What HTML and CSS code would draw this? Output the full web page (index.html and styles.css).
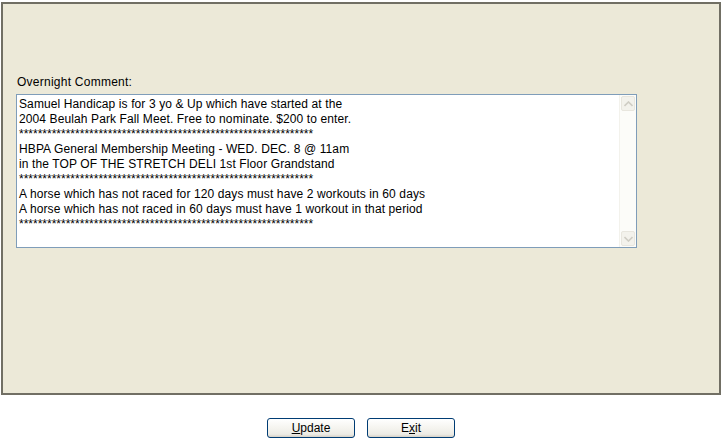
FILE: index.html
```html
<!DOCTYPE html>
<html>
<head>
<meta charset="utf-8">
<link rel="stylesheet" href="styles.css">
</head>
<body>
<div class="panel">
  <div class="label">Overnight Comment:</div>
  <div class="memo">
    <div class="memo-text">Samuel Handicap is for 3 yo &amp; Up which have started at the
2004 Beulah Park Fall Meet. Free to nominate. $200 to enter.
<span class="stars">***************************************************************</span>
HBPA General Membership Meeting - WED. DEC. 8 @ 11am
in the TOP OF THE STRETCH DELI 1st Floor Grandstand
<span class="stars">***************************************************************</span>
A horse which has not raced for 120 days must have 2 workouts in 60 days
A horse which has not raced in 60 days must have 1 workout in that period
<span class="stars">***************************************************************</span></div>
    <div class="scrollbar">
      <div class="sb-btn">
        <svg width="9" height="6" viewBox="0 0 9 6"><path d="M0.5 5 L4.5 1 L8.5 5" fill="none" stroke="#cfcdc4" stroke-width="1.6"/></svg>
      </div>
      <div class="sb-track"></div>
      <div class="sb-btn">
        <svg width="9" height="6" viewBox="0 0 9 6"><path d="M0.5 1 L4.5 5 L8.5 1" fill="none" stroke="#cfcdc4" stroke-width="1.6"/></svg>
      </div>
    </div>
  </div>
</div>
<div class="actions">
  <button class="btn"><u>U</u>pdate</button>
  <button class="btn">E<u>x</u>it</button>
</div>
</body>
</html>
```

FILE: styles.css
```css
html, body {
  margin: 0;
  padding: 0;
  background: #ffffff;
}
body {
  font-family: "Liberation Sans", Arial, sans-serif;
  font-size: 12px;
  color: #000;
  width: 723px;
  height: 447px;
  overflow: hidden;
}
.panel {
  box-sizing: border-box;
  margin: 2px 2px 0 1px;
  height: 393px;
  border: 2px solid #716f64;
  background: #ece9d8;
  padding: 71px 13px 0 13px;
}
.label {
  line-height: 15px;
  height: 15px;
  margin-bottom: 4px;
  padding-left: 1px;
  letter-spacing: 0.25px;
}
.memo {
  box-sizing: border-box;
  width: 621px;
  height: 154px;
  border: 1px solid #7f9db9;
  background: #ffffff;
  display: flex;
}
.memo-text {
  flex: 1;
  white-space: pre;
  overflow: hidden;
  line-height: 15px;
  padding: 2px 0 0 2px;
  letter-spacing: 0.11px;
}
.stars {
  letter-spacing: 0;
}
.scrollbar {
  width: 17px;
  display: flex;
  flex-direction: column;
  background: #fcfcf9;
  border-left: 1px solid #f3f2ec;
  box-sizing: border-box;
  padding: 1px;
}
.sb-btn {
  height: 15px;
  box-sizing: border-box;
  border: 1px solid #e8e6de;
  border-radius: 2px;
  background: #f3f2ec;
  display: flex;
  align-items: center;
  justify-content: center;
}
.sb-track {
  flex: 1;
}
.actions {
  display: flex;
  justify-content: center;
  gap: 12px;
  margin-top: 23px;
  padding-right: 1px;
}
.btn {
  box-sizing: border-box;
  width: 88px;
  height: 20px;
  border: 1px solid #003c74;
  border-radius: 3px;
  background: linear-gradient(#ffffff 0%, #f5f4ef 50%, #ecebe5 85%, #d6d0c5 100%);
  font-family: "Liberation Sans", Arial, sans-serif;
  font-size: 12px;
  color: #000;
  padding: 0;
  line-height: 16px;
}
.btn u {
  text-decoration: underline;
}
```
